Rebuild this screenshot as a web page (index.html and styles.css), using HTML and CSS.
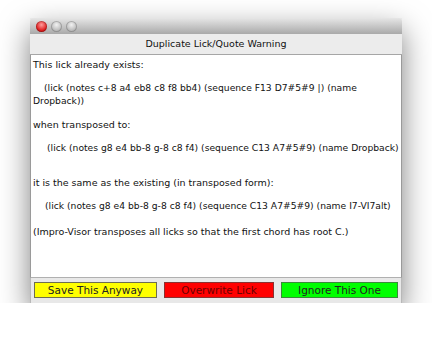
FILE: index.html
```html
<!DOCTYPE html>
<html lang="en">
<head>
  <meta charset="UTF-8">
  <title>Duplicate Lick/Quote Warning</title>
  <link rel="stylesheet" href="styles.css">
</head>
<body>
  <div class="window">
    <div class="titlebar">
      <span class="light red"></span>
      <span class="light"></span>
      <span class="light"></span>
    </div>
    <div class="heading">Duplicate Lick/Quote Warning</div>

    <div class="message">
      <p>This lick already exists:</p>
      <p class="lick first">(lick (notes c+8 a4 eb8 c8 f8 bb4) (sequence F13 D7#5#9 |) (name<br>Dropback))</p>
      <p>when transposed to:</p>
      <p class="lick second">(lick (notes g8 e4 bb-8 g-8 c8 f4) (sequence C13 A7#5#9) (name Dropback)</p>
      <p>it is the same as the existing (in transposed form):</p>
      <p class="lick third">(lick (notes g8 e4 bb-8 g-8 c8 f4) (sequence C13 A7#5#9) (name I7-VI7alt)</p>
      <p class="note">(Impro-Visor transposes all licks so that the first chord has root C.)</p>
    </div>

    <div class="buttons">
      <button class="btn save">Save This Anyway</button>
      <button class="btn overwrite">Overwrite Lick</button>
      <button class="btn ignore">Ignore This One</button>
    </div>
  </div>
</body>
</html>
```

FILE: styles.css
```css
body {
  margin: 0;
  background-color: white;
  font-family: "DejaVu Sans", sans-serif;
  font-size: 9.5px;
  color: #111;
}

.window {
  width: 372px;
  margin: 18px 0 0 30px;
  background-color: #e8e8e8;
  box-shadow: 0 12px 28px rgba(0, 0, 0, 0.5);
}

.titlebar {
  height: 16px;
  display: flex;
  align-items: center;
  gap: 4px;
  padding-left: 6px;
  background: linear-gradient(#e6e6e6, #a9a9a9);
  border-radius: 4px 4px 0 0;
}

.light {
  width: 11px;
  height: 11px;
  border-radius: 50%;
  background: radial-gradient(circle at 50% 35%, #f2f2f2, #b4b4b4 70%, #9a9a9a);
  box-shadow: inset 0 0 0 1px rgba(0, 0, 0, 0.18);
}

.light.red {
  background: radial-gradient(circle at 50% 35%, #ff9c9c, #e02020 60%, #a00000);
}

.heading {
  height: 20px;
  line-height: 20px;
  text-align: center;
  background-color: #ececec;
  border-bottom: 1px solid #a6a6a6;
}

.message {
  height: 219px;
  padding: 3px 2px 0;
  background-color: white;
  border-left: 1px solid #9a9a9a;
  border-right: 1px solid #9a9a9a;
  border-bottom: 1px solid #b0b0b0;
  line-height: 13px;
}

.message p {
  margin: 0 0 10px;
  white-space: nowrap;
}

.lick {
  font-size: 9.2px;
}

.lick.first {
  text-indent: 11px;
  margin-bottom: 11px;
}

.lick.second {
  padding-left: 14px;
  margin-bottom: 22px;
}

.lick.third {
  padding-left: 12px;
  margin-bottom: 13px;
}

.buttons {
  display: flex;
  gap: 7px;
  padding: 4px 3px 5px;
  border-left: 1px solid #b8b8b8;
  border-right: 1px solid #b8b8b8;
}

.btn {
  height: 16px;
  padding: 0;
  font-family: "DejaVu Sans", sans-serif;
  font-size: 10.5px;
  color: #222;
  border: 1px solid #6e6e50;
}

.save {
  width: 124px;
  background-color: #ffff00;
}

.overwrite {
  width: 111px;
  background-color: #ff0000;
  border-color: #8a3030;
  color: #6a0000;
}

.ignore {
  width: 118px;
  background-color: #00ff00;
  border-color: #3a8a3a;
}
```
